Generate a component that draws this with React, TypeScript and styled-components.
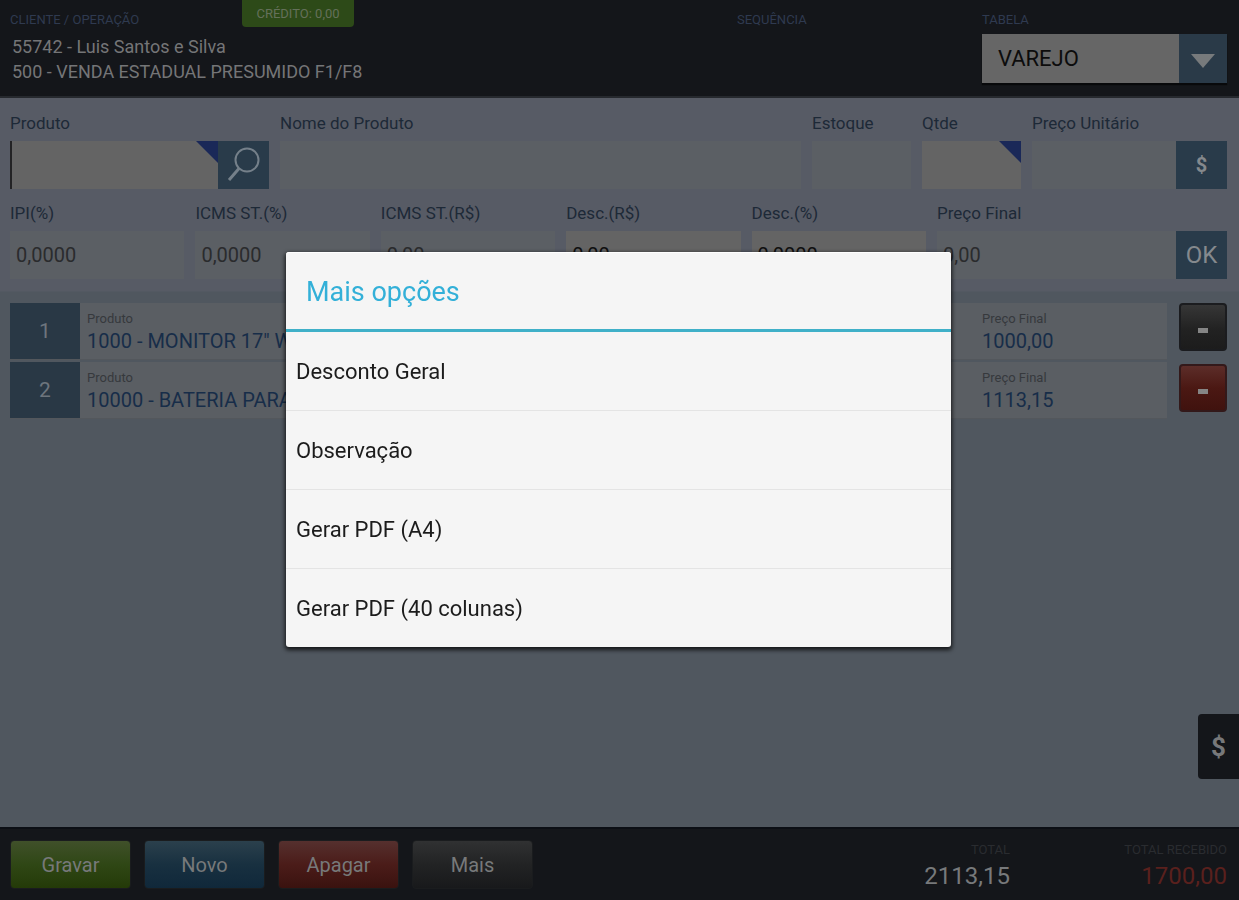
import React from 'react';
import styled, { createGlobalStyle } from 'styled-components';

const GlobalStyle = createGlobalStyle`
  *, *::before, *::after { box-sizing: border-box; }
  body {
    margin: 0;
    background: #50575f;
    font-family: Roboto, "Liberation Sans", sans-serif;
  }
  button, input, select { font-family: inherit; }
`;

const Page = styled.div`
  position: relative;
  display: flex;
  flex-direction: column;
  min-height: 100vh;
  background: #50575f;
`;

/* Header */

const Header = styled.header`
  position: relative;
  display: grid;
  grid-template-columns: 1fr 233px 245px;
  column-gap: 12px;
  height: 98px;
  padding: 10px 12px 0 10px;
  background: #14161a;
  border-bottom: 2px solid #26292e;
`;

const HeaderCell = styled.div`
  display: flex;
  flex-direction: column;
`;

const Caption = styled.label`
  font-size: 13px;
  line-height: 20px;
  color: #2f3a50;
`;

const ClientLine = styled.div`
  padding-left: 2px;
  font-size: 18px;
  line-height: 25px;
  color: #747577;
`;

const ClientLines = styled.div`
  padding-top: 4px;
`;

const CreditBadge = styled.div`
  position: absolute;
  top: 0;
  left: 242px;
  width: 112px;
  height: 27px;
  border-radius: 0 0 4px 4px;
  background: #2d4a18;
  color: #64705a;
  font-size: 13px;
  line-height: 27px;
  text-align: center;
`;

const SelectBox = styled.div`
  position: relative;
  margin-top: 4px;
  height: 49px;
`;

const PriceTable = styled.select`
  width: 100%;
  height: 49px;
  padding: 0 64px 0 16px;
  appearance: none;
  border: 0;
  border-radius: 0;
  background: #666666;
  color: #0c0c0c;
  font-size: 22px;
  box-shadow: 0 2px 1px #08090b;
`;

const SelectArrow = styled.span`
  position: absolute;
  top: 0;
  right: 0;
  display: flex;
  align-items: center;
  justify-content: center;
  width: 48px;
  height: 49px;
  padding-top: 4px;
  background: #2a3a48;
  pointer-events: none;
`;

/* Product form */

const Form = styled.form`
  display: flex;
  flex-direction: column;
  gap: 14px;
  padding: 15px 12px 12px 10px;
  background: #575b65;
  border-bottom: 1px solid #535962;
`;

const FieldRow = styled.div<{ $columns: string }>`
  display: grid;
  grid-template-columns: ${(p) => p.$columns};
  column-gap: 11px;
`;

const FieldCell = styled.div`
  display: flex;
  flex-direction: column;
  gap: 8px;
  min-width: 0;
`;

const FieldLabel = styled.label`
  font-size: 17px;
  line-height: 20px;
  color: #1d2937;
`;

const FieldBody = styled.div`
  position: relative;
  display: flex;
  height: 48px;
`;

const InputWrap = styled.div<{ $marked?: boolean }>`
  position: relative;
  flex: 1;
  min-width: 0;

  &::after {
    content: "";
    display: ${(p) => (p.$marked ? 'block' : 'none')};
    position: absolute;
    top: 0;
    right: 0;
    width: 22px;
    height: 22px;
    background: #1a2858;
    clip-path: polygon(0 0, 100% 0, 100% 100%);
  }
`;

const TextInput = styled.input<{ $tone: 'active' | 'open' | 'locked' }>`
  width: 100%;
  height: 48px;
  padding: 0 6px;
  border: 0;
  border-left: ${(p) => (p.$tone === 'active' ? '2px solid #232325' : '0')};
  border-radius: 0;
  outline: none;
  background: ${(p) => (p.$tone === 'locked' ? '#5b5f64' : '#646464')};
  color: ${(p) => (p.$tone === 'locked' ? '#2a2b2d' : '#101010')};
  font-size: 20px;
`;

const FieldButton = styled.button<{ $small?: boolean }>`
  display: flex;
  align-items: center;
  justify-content: center;
  width: 51px;
  height: 48px;
  padding: 0;
  border: 0;
  background: #293b4a;
  color: #85898d;
  font-size: ${(p) => (p.$small ? '20px' : '24px')};
  font-weight: ${(p) => (p.$small ? 700 : 400)};
`;

/* Item list */

const ListArea = styled.main`
  display: flex;
  flex: 1;
  align-items: flex-start;
  gap: 12px;
  padding: 11px 12px 11px 10px;
`;

const ItemList = styled.ul`
  display: flex;
  flex: 1;
  flex-direction: column;
  gap: 3px;
  margin: 0;
  padding: 0;
  list-style: none;
`;

const Item = styled.li`
  display: grid;
  grid-template-columns: 70px 1fr 185px;
  height: 56px;
  background: #5a5e63;
  box-shadow: 0 1px 0 #53575c;
`;

const ItemIndex = styled.div`
  display: flex;
  align-items: center;
  justify-content: center;
  background: #293845;
  color: #6d757d;
  font-size: 21px;
`;

const ItemCell = styled.div`
  padding: 8px 0 0 7px;
  white-space: nowrap;
`;

const PriceCell = styled(ItemCell)`
  padding-left: 0;
`;

const ItemCaption = styled.div`
  font-size: 13px;
  line-height: 16px;
  color: #36393d;
`;

const ItemValue = styled.div`
  font-size: 20px;
  line-height: 28px;
  color: #172d49;
`;

const RemoveColumn = styled.div`
  display: flex;
  flex-direction: column;
  gap: 13px;
`;

const RemoveButton = styled.button<{ $red?: boolean }>`
  display: flex;
  align-items: center;
  justify-content: center;
  width: 48px;
  height: 48px;
  padding: 6px 0 0;
  border: 2px solid ${(p) => (p.$red ? '#33191a' : '#1b1c1f')};
  border-radius: 4px;
  background: ${(p) =>
    p.$red
      ? 'linear-gradient(#5c2d29, #4b1813 50%, #40120e)'
      : 'linear-gradient(#363636, #222222 55%, #1c1c1c)'};
`;

const SideTab = styled.button`
  position: absolute;
  right: 0;
  bottom: 121px;
  width: 41px;
  height: 65px;
  padding: 0;
  border: 0;
  border-radius: 4px 0 0 4px;
  background: #14161a;
  color: #77787a;
  font-size: 26px;
  font-weight: 700;
`;

/* Footer */

const Footer = styled.footer`
  display: flex;
  align-items: flex-start;
  gap: 13px;
  height: 73px;
  padding: 11px 12px 0 10px;
  border-top: 2px solid #0c0f15;
  background: #14161a;
`;

const ActionButton = styled.button<{ $fill: string }>`
  width: 121px;
  height: 49px;
  padding: 1px 0 0;
  border: 1px solid #1a1c1e;
  border-radius: 4px;
  background: ${(p) => p.$fill};
  color: #77797a;
  font-size: 20px;
`;

const Totals = styled.div`
  display: flex;
  flex: 1;
  justify-content: flex-end;
  padding-top: 1px;
`;

const Total = styled.div`
  width: 217px;
  text-align: right;
`;

const TotalCaption = styled.div`
  font-size: 13px;
  line-height: 18px;
  color: #2a2c30;
`;

const TotalValue = styled.div<{ $due?: boolean }>`
  font-size: 24px;
  line-height: 34px;
  color: ${(p) => (p.$due ? '#5a201d' : '#77797b')};
`;

/* Dialog */

const Overlay = styled.div`
  position: fixed;
  inset: 0;
  display: flex;
  align-items: center;
  justify-content: center;
  padding: 0 26px 2px 24px;
`;

const Dialog = styled.section`
  width: 100%;
  max-width: 665px;
  border-radius: 3px;
  background: #f5f5f5;
  box-shadow: 0 2px 4px 1px rgba(0, 0, 0, 0.75), inset 0 1px 0 #ffffff;
`;

const DialogTitle = styled.h2`
  margin: 0;
  padding: 3px 20px 0;
  border-bottom: 3px solid #3fb0c8;
  color: #33b0d8;
  font-size: 27px;
  font-weight: 400;
  line-height: 74px;
`;

const OptionList = styled.ul`
  margin: 0;
  padding: 0;
  list-style: none;
`;

const Option = styled.li`
  border-bottom: 1px solid #e4e4e4;

  &:last-child { border-bottom: 0; }
`;

const OptionButton = styled.button`
  display: block;
  width: 100%;
  height: 78px;
  padding: 2px 10px 0;
  border: 0;
  background: transparent;
  color: #1c1c1c;
  font-size: 22px;
  text-align: left;
`;

type FieldProps = {
  id: string;
  label: string;
  value?: string;
  tone?: 'active' | 'open' | 'locked';
  marked?: boolean;
  children?: React.ReactNode;
};

function Field({ id, label, value = '', tone = 'locked', marked, children }: FieldProps) {
  return (
    <FieldCell>
      <FieldLabel htmlFor={id}>{label}</FieldLabel>
      <FieldBody>
        <InputWrap $marked={marked}>
          <TextInput id={id} $tone={tone} defaultValue={value} readOnly={tone === 'locked'} />
        </InputWrap>
        {children}
      </FieldBody>
    </FieldCell>
  );
}

const items = [
  { name: '1000 - MONITOR 17" W', price: '1000,00' },
  { name: '10000 - BATERIA PARA', price: '1113,15' },
];

const actions = [
  { label: 'Gravar', fill: 'linear-gradient(#40502a, #2f4715 50%, #243a08)' },
  { label: 'Novo', fill: 'linear-gradient(#2b404c, #183040 50%, #10283a)' },
  { label: 'Apagar', fill: 'linear-gradient(#55302e, #4b1c19 50%, #3a120f)' },
  { label: 'Mais', fill: 'linear-gradient(#303132, #222324 50%, #18191b)' },
];

const options = ['Desconto Geral', 'Observação', 'Gerar PDF (A4)', 'Gerar PDF (40 colunas)'];

export default function App() {
  return (
    <>
      <GlobalStyle />
      <Page>
        <Header>
          <HeaderCell>
            <Caption as="div">CLIENTE / OPERAÇÃO</Caption>
            <ClientLines>
              <ClientLine>55742 - Luis Santos e Silva</ClientLine>
              <ClientLine>500 - VENDA ESTADUAL PRESUMIDO F1/F8</ClientLine>
            </ClientLines>
          </HeaderCell>
          <HeaderCell>
            <Caption as="div">SEQUÊNCIA</Caption>
          </HeaderCell>
          <HeaderCell>
            <Caption htmlFor="tabela">TABELA</Caption>
            <SelectBox>
              <PriceTable id="tabela" defaultValue="VAREJO">
                <option>VAREJO</option>
              </PriceTable>
              <SelectArrow>
                <svg width="24" height="14" viewBox="0 0 24 14" aria-hidden="true">
                  <path d="M0 0H24L12 14Z" fill="#777a7c" />
                </svg>
              </SelectArrow>
            </SelectBox>
          </HeaderCell>
          <CreditBadge>CRÉDITO: 0,00</CreditBadge>
        </Header>

        <Form onSubmit={(e) => e.preventDefault()}>
          <FieldRow $columns="259px 1fr 99px 99px 195px">
            <Field id="produto" label="Produto" tone="active" marked>
              <FieldButton type="button" aria-label="Buscar produto">
                <svg width="34" height="36" viewBox="0 0 34 36" fill="none" aria-hidden="true">
                  <circle cx="20" cy="13" r="11.500" stroke="#75808a" strokeWidth="2" />
                  <path d="M12 21.500L2 33" stroke="#75808a" strokeWidth="3" />
                </svg>
              </FieldButton>
            </Field>
            <Field id="nome" label="Nome do Produto" />
            <Field id="estoque" label="Estoque" />
            <Field id="qtde" label="Qtde" tone="open" marked />
            <Field id="preco" label="Preço Unitário">
              <FieldButton type="button" $small>$</FieldButton>
            </Field>
          </FieldRow>
          <FieldRow $columns="repeat(5, 1fr) 290px">
            <Field id="ipi" label="IPI(%)" value="0,0000" />
            <Field id="icms-p" label="ICMS ST.(%)" value="0,0000" />
            <Field id="icms-r" label="ICMS ST.(R$)" value="0,00" />
            <Field id="desc-r" label="Desc.(R$)" value="0,00" tone="open" />
            <Field id="desc-p" label="Desc.(%)" value="0,0000" tone="open" />
            <Field id="final" label="Preço Final" value="0,00">
              <FieldButton type="submit">OK</FieldButton>
            </Field>
          </FieldRow>
        </Form>

        <ListArea>
          <ItemList>
            {items.map((item, i) => (
              <Item key={item.name}>
                <ItemIndex>{i + 1}</ItemIndex>
                <ItemCell>
                  <ItemCaption>Produto</ItemCaption>
                  <ItemValue>{item.name}</ItemValue>
                </ItemCell>
                <PriceCell>
                  <ItemCaption>Preço Final</ItemCaption>
                  <ItemValue>{item.price}</ItemValue>
                </PriceCell>
              </Item>
            ))}
          </ItemList>
          <RemoveColumn>
            {items.map((item, i) => (
              <RemoveButton key={item.name} type="button" $red={i === 1} aria-label={`Remover ${item.name}`}>
                <svg width="10" height="5" viewBox="0 0 10 5" aria-hidden="true">
                  <rect width="10" height="5" fill="#858585" />
                </svg>
              </RemoveButton>
            ))}
          </RemoveColumn>
        </ListArea>

        <SideTab type="button">$</SideTab>

        <Footer>
          {actions.map((a) => (
            <ActionButton key={a.label} type="button" $fill={a.fill}>
              {a.label}
            </ActionButton>
          ))}
          <Totals>
            <Total>
              <TotalCaption>TOTAL</TotalCaption>
              <TotalValue>2113,15</TotalValue>
            </Total>
            <Total>
              <TotalCaption>TOTAL RECEBIDO</TotalCaption>
              <TotalValue $due>1700,00</TotalValue>
            </Total>
          </Totals>
        </Footer>
      </Page>

      <Overlay>
        <Dialog role="dialog" aria-modal="true" aria-labelledby="dialog-title">
          <DialogTitle id="dialog-title">Mais opções</DialogTitle>
          <OptionList>
            {options.map((o) => (
              <Option key={o}>
                <OptionButton type="button">{o}</OptionButton>
              </Option>
            ))}
          </OptionList>
        </Dialog>
      </Overlay>
    </>
  );
}
